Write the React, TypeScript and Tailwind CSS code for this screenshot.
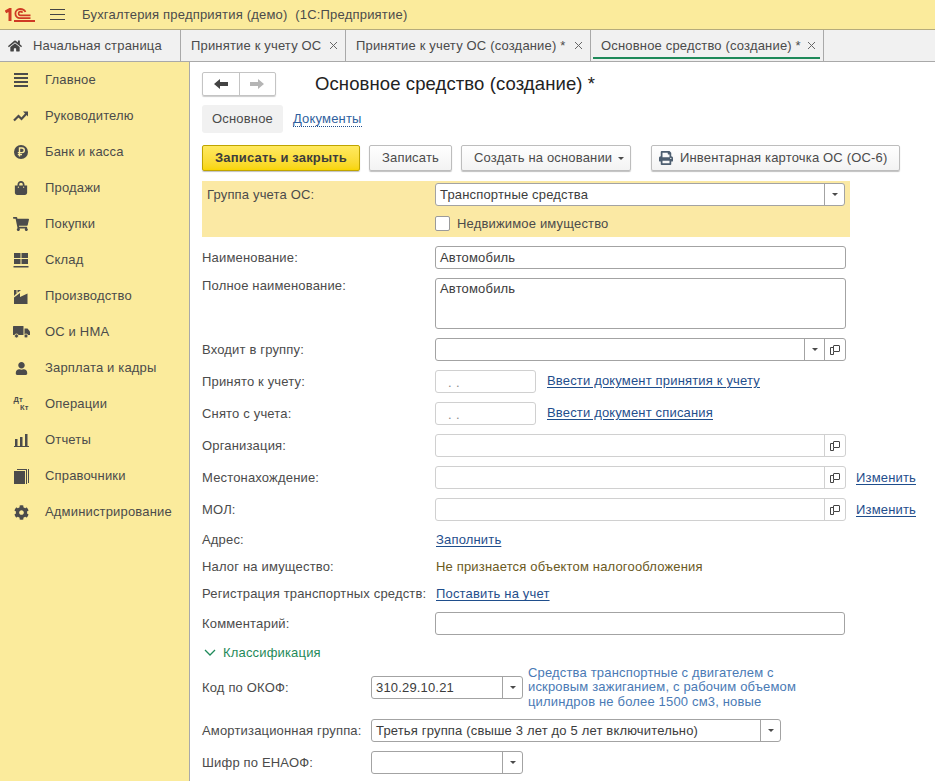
import type { ReactNode } from "react";
import { FaCog, FaHome, FaPrint, FaShoppingBag, FaShoppingCart, FaUser } from "react-icons/fa";

const Trend = () => (
  <svg width="16" height="16" viewBox="0 0 16 16" fill="none" stroke="#4b4b4b" strokeWidth="2.2">
    <path d="M1 12.5 5.5 8l3 3L14 5" />
    <path d="M10 3.6h5v5" fill="#4b4b4b" stroke="none" />
  </svg>
);

const Lines = () => (
  <svg width="16" height="14" viewBox="0 0 16 14" fill="#4b4b4b">
    <rect x="1" y="0" width="14" height="2" />
    <rect x="1" y="4" width="14" height="2" />
    <rect x="1" y="8" width="14" height="2" />
    <rect x="1" y="12" width="14" height="2" />
  </svg>
);

const Ruble = () => (
  <svg width="16" height="16" viewBox="0 0 16 16">
    <circle cx="8" cy="8" r="7" fill="#4b4b4b" />
    <path d="M6.5 12.5V4H9a2.2 2.2 0 0 1 0 4.6H4.8M4.8 10.6H9" fill="none" stroke="#fbeb9c" strokeWidth="1.4" />
  </svg>
);

const Store = () => (
  <svg width="16" height="15" viewBox="0 0 16 15" fill="#4b4b4b">
    <rect x="1" y="0" width="6.5" height="5" />
    <rect x="8.5" y="0" width="6.5" height="5" />
    <rect x="1" y="6" width="6.5" height="5" />
    <rect x="8.5" y="6" width="6.5" height="5" />
    <rect x="0.5" y="13" width="15" height="1.5" />
  </svg>
);

const Factory = () => (
  <svg width="16" height="15" viewBox="0 0 16 15" fill="#4b4b4b">
    <path d="M1 15V8.5L7 4v4l7.5-3.5V15z" />
    <path d="M1 7V1h2.5v3.5z" />
    <path d="M4.5 3.8V1H8z" />
  </svg>
);

const Truck = () => (
  <svg width="17" height="12" viewBox="0 0 17 12" fill="#4b4b4b">
    <rect x="0" y="0" width="10.5" height="9" rx="0.5" />
    <path d="M11.5 2.5h3L17 5.5V9h-5.5z" />
    <circle cx="3.5" cy="10" r="2" stroke="#fbeb9c" strokeWidth="0.8" />
    <circle cx="13" cy="10" r="2" stroke="#fbeb9c" strokeWidth="0.8" />
  </svg>
);

const Bars = () => (
  <svg width="15" height="13" viewBox="0 0 15 13" fill="#4b4b4b">
    <rect x="1" y="5" width="2.5" height="7" />
    <rect x="6" y="3" width="2.5" height="9" />
    <rect x="11" y="0" width="2.5" height="12" />
    <rect x="0" y="12" width="15" height="1" />
  </svg>
);

const Pages = () => (
  <svg width="15" height="15" viewBox="0 0 15 15" fill="#4b4b4b">
    <rect x="0" y="2" width="11" height="13" />
    <path d="M12 15V1H3V0h10v15z" />
    <path d="M14 14V0h1v14z" />
  </svg>
);

const DtKt = () => (
  <div className="flex w-[15px] flex-col text-[7.5px] leading-[8px] font-bold text-[#4b4b4b]">
    <span>Дт</span>
    <span className="self-end">Кт</span>
  </div>
);

const menu: { label: string; icon: ReactNode }[] = [
  { label: "Главное", icon: <Lines /> },
  { label: "Руководителю", icon: <Trend /> },
  { label: "Банк и касса", icon: <Ruble /> },
  { label: "Продажи", icon: <FaShoppingBag size={14} /> },
  { label: "Покупки", icon: <FaShoppingCart size={16} /> },
  { label: "Склад", icon: <Store /> },
  { label: "Производство", icon: <Factory /> },
  { label: "ОС и НМА", icon: <Truck /> },
  { label: "Зарплата и кадры", icon: <FaUser size={13} /> },
  { label: "Операции", icon: <DtKt /> },
  { label: "Отчеты", icon: <Bars /> },
  { label: "Справочники", icon: <Pages /> },
  { label: "Администрирование", icon: <FaCog size={15} /> },
];

const Logo = () => (
  <svg width="30" height="14" viewBox="0 0 30 14" fill="none" stroke="#cf3a24">
    <path d="M0.5 4 5 1.4V13" strokeWidth="3" />
    <path d="M25.5 10.2H15a4.6 4.6 0 0 1 0-9.2c2.8 0 4.6 1 5.4 3" strokeWidth="1.8" />
    <path d="M25.5 7.4h-10a1.9 1.9 0 0 1 0-3.8c1 0 1.7.3 2.1 1" strokeWidth="1.6" />
    <path d="M9 13h21" strokeWidth="2" />
  </svg>
);

const Caret = () => <span className="h-0 w-0 border-x-[3px] border-t-[3px] border-x-transparent border-t-[#4a4a4a]" />;

const CopyIcon = () => (
  <svg width="10" height="10" viewBox="0 0 10 10" fill="none" stroke="#444" strokeWidth="1">
    <rect x="3.5" y="0.5" width="6" height="6" rx="0.5" />
    <path d="M3.5 2.5H.5v7h3V6.5" />
  </svg>
);

const Close = () => (
  <svg width="9" height="9" viewBox="0 0 9 9" fill="none" stroke="#666" strokeWidth="1">
    <path d="m1 1 7 7M8 1 1 8" />
  </svg>
);

type FieldProps = {
  value?: string;
  width?: string;
  dark?: boolean;
  dropdown?: boolean;
  copy?: boolean;
};

function Field({ value, width = "w-[411px]", dark, dropdown, copy }: FieldProps) {
  const border = dark ? "border-[#a3a3a3]" : "border-[#d0d0d0]";
  return (
    <div className={`flex h-[23px] shrink-0 items-stretch rounded-[3px] border bg-white ${border} ${width}`}>
      <div className="flex-1 truncate pl-1 leading-[21px] text-[#3c3c3c]">{value}</div>
      {dropdown && (
        <div className={`flex w-[20px] items-center justify-center border-l ${border}`}>
          <Caret />
        </div>
      )}
      {copy && (
        <div className={`flex w-[21px] items-center justify-center border-l ${border}`}>
          <CopyIcon />
        </div>
      )}
    </div>
  );
}

const DateField = () => (
  <div className="flex h-[23px] w-[101px] shrink-0 rounded-[3px] border border-[#d0d0d0] pl-[12px] leading-[23px] text-[#8a8a8a]">
    <span className="w-[8px]">.</span>
    <span>.</span>
  </div>
);

function Row({ label, labelWidth = "w-[233px]", children }: { label: string; labelWidth?: string; children?: ReactNode }) {
  return (
    <div className="flex items-start">
      <div className={`shrink-0 leading-[23px] text-[#4b4b4b] ${labelWidth}`}>{label}</div>
      {children}
    </div>
  );
}

function TextRow({ label, children }: { label: string; children: ReactNode }) {
  return (
    <div className="flex h-[18px] items-center pt-[2px]">
      <div className="w-[234px] shrink-0 whitespace-nowrap text-[#4b4b4b]">{label}</div>
      {children}
    </div>
  );
}

const Link = ({ children }: { children: ReactNode }) => (
  <a className="whitespace-nowrap text-[#1f4e8c] underline underline-offset-2">{children}</a>
);

function Button({ children, className = "" }: { children: ReactNode; className?: string }) {
  return (
    <button
      className={`flex h-[26px] items-center rounded-[2px] border border-[#bdbdbd] bg-linear-to-b from-white to-[#f3f3f3] text-[#4b4b4b] shadow-[0_1px_1px_rgba(0,0,0,0.25)] ${className}`}
    >
      {children}
    </button>
  );
}

function Tab({ label, width, active }: { label: string; width: string; active?: boolean }) {
  return (
    <div className={`relative flex items-center justify-between border-r border-[#a9a9a9] pr-[7px] pl-[10px] ${width}`}>
      <span className="whitespace-nowrap text-[#4b4b4b]">{label}</span>
      <Close />
      {active && <span className="absolute right-[3px] bottom-[2px] left-[2px] h-[2px] bg-[#1f8a5a]" />}
    </div>
  );
}

export default function App() {
  return (
    <div className="flex h-[781px] w-[935px] flex-col overflow-hidden bg-white font-['Liberation_Sans',Arial,sans-serif] text-[13px] tracking-[0.17px]">
      <header className="flex h-[30px] shrink-0 items-center border-b border-[#b5ab7c] bg-[#fbeb9c] pl-[5px] text-[#4b4b4b]">
        <Logo />
        <div className="ml-[15px] flex w-[15px] flex-col gap-[4px]">
          <span className="h-px bg-[#444]" />
          <span className="h-px bg-[#444]" />
          <span className="h-px bg-[#444]" />
        </div>
        <span className="ml-[17px] whitespace-pre tracking-[0.2px]">Бухгалтерия предприятия (демо)  (1С:Предприятие)</span>
      </header>

      <nav className="flex h-[32px] shrink-0 border-b border-[#a9a9a9] bg-[#f1f1f1]">
        <div className="flex w-[181px] items-center border-r border-[#a9a9a9] pl-[8px] text-[#4b4b4b]">
          <FaHome size={14} color="#444" />
          <span className="ml-[11px]">Начальная страница</span>
        </div>
        <Tab label="Принятие к учету ОС" width="w-[165px]" />
        <Tab label="Принятие к учету ОС (создание) *" width="w-[245px]" />
        <Tab label="Основное средство (создание) *" width="w-[233px]" active />
      </nav>

      <div className="flex min-h-0 flex-1">
        <aside className="w-[190px] shrink-0 border-r border-[#a9a9a9] bg-[#fbeb9c]">
          {menu.map((m) => (
            <div key={m.label} className="flex h-[36px] items-center text-[#4b4b4b]">
              <div className="flex w-[45px] shrink-0 items-center justify-center pr-[3px]">{m.icon}</div>
              <span className="whitespace-nowrap">{m.label}</span>
            </div>
          ))}
        </aside>

        <main className="flex min-w-0 flex-1 flex-col pt-[10px] pl-[12px]">
          <div className="flex h-[24px] items-center">
            <div className="flex h-[24px] w-[74px] rounded-[2px] border border-[#c4c4c4] shadow-[0_1px_1px_rgba(0,0,0,0.2)]">
              <div className="flex flex-1 items-center justify-center border-r border-[#c4c4c4]">
                <svg width="14" height="10" viewBox="0 0 14 10" fill="#444"><path d="M0 5 6 0v3h8v4H6v3z" /></svg>
              </div>
              <div className="flex flex-1 items-center justify-center">
                <svg width="14" height="10" viewBox="0 0 14 10" fill="#b5b5b5"><path d="M14 5 8 0v3H0v4h8v3z" /></svg>
              </div>
            </div>
            <h1 className="ml-[39px] text-[18.5px] tracking-[0.1px] whitespace-nowrap text-[#222]">Основное средство (создание) *</h1>
          </div>

          <div className="mt-[9px] flex h-[28px] items-center">
            <div className="flex h-[28px] w-[81px] items-center justify-center rounded-[3px] bg-[#f1f1f1] text-[#4b4b4b]">Основное</div>
            <a className="ml-[10px] border-b border-dotted border-[#1f4e8c] leading-[15px] text-[#2f5f9e]">Документы</a>
          </div>

          <div className="mt-[12px] flex items-center">
            <button className="flex h-[26px] w-[158px] items-center justify-center rounded-[2px] border border-[#bfa400] bg-linear-to-b from-[#ffe95e] to-[#f8d500] font-bold text-[#3c3c3c] shadow-[0_1px_1px_rgba(0,0,0,0.25)]">
              Записать и закрыть
            </button>
            <Button className="ml-[9px] w-[83px] justify-center">Записать</Button>
            <Button className="ml-[9px] w-[170px] gap-[6px] pl-[12px]">
              Создать на основании
              <Caret />
            </Button>
            <Button className="ml-[20px] w-[249px] gap-[7px] pl-[7px]">
              <FaPrint size={14} color="#4d5e70" />
              Инвентарная карточка ОС (ОС-6)
            </Button>
          </div>

          <div className="mt-[10px] flex flex-col gap-[9px]">
            <div className="h-[56px] w-[648px] bg-[#fbe9a4] pt-[2px]">
              <div className="flex items-start pl-[5px]">
                <div className="w-[228px] shrink-0 leading-[23px] text-[#4b4b4b]">Группа учета ОС:</div>
                <Field value="Транспортные средства" width="w-[410px]" dark dropdown />
              </div>
              <div className="mt-[10px] flex h-[15px] items-center pl-[233px]">
                <span className="h-[15px] w-[15px] rounded-[2px] border border-[#9a9a9a] bg-white" />
                <span className="ml-[7px] text-[#4b4b4b]">Недвижимое имущество</span>
              </div>
            </div>

            <Row label="Наименование:">
              <Field value="Автомобиль" dark />
            </Row>
            <div className="flex items-start">
              <div className="w-[233px] shrink-0 leading-[15px] text-[#4b4b4b]">Полное наименование:</div>
              <div className="h-[51px] w-[411px] rounded-[3px] border border-[#a3a3a3] pl-1 leading-[19px] text-[#3c3c3c]">Автомобиль</div>
            </div>
            <Row label="Входит в группу:">
              <Field dark dropdown copy />
            </Row>
            <Row label="Принято к учету:">
              <DateField />
              <span className="ml-[11px] leading-[21px]"><Link>Ввести документ принятия к учету</Link></span>
            </Row>
            <Row label="Снято с учета:">
              <DateField />
              <span className="ml-[11px] leading-[21px]"><Link>Ввести документ списания</Link></span>
            </Row>
            <Row label="Организация:">
              <Field copy />
            </Row>
            <Row label="Местонахождение:">
              <Field copy />
              <span className="ml-[10px] leading-[23px]"><Link>Изменить</Link></span>
            </Row>
            <Row label="МОЛ:">
              <Field copy />
              <span className="ml-[10px] leading-[23px]"><Link>Изменить</Link></span>
            </Row>

            <TextRow label="Адрес:"><Link>Заполнить</Link></TextRow>
            <TextRow label="Налог на имущество:">
              <span className="text-[#6b5a1e]">Не признается объектом налогообложения</span>
            </TextRow>
            <TextRow label="Регистрация транспортных средств:"><Link>Поставить на учет</Link></TextRow>

            <div className="mt-px">
              <Row label="Комментарий:">
                <Field width="w-[410px]" dark />
              </Row>
            </div>

            <div className="flex h-[17px] items-center pl-[2px] text-[#1f8a5a]">
              <svg width="12" height="8" viewBox="0 0 12 8" fill="none" stroke="#1f8a5a" strokeWidth="1.3"><path d="m1 1 5 5 5-5" /></svg>
              <span className="ml-[7px]">Классификация</span>
            </div>

            <div className="-mt-[5px] flex h-[45px] items-center">
              <div className="w-[169px] shrink-0 text-[#4b4b4b]">Код по ОКОФ:</div>
              <Field value="310.29.10.21" width="w-[152px]" dark dropdown />
              <div className="ml-[5px] w-[290px] leading-[14.5px] text-[#4a7ab5]">
                Средства транспортные с двигателем с искровым зажиганием, с рабочим объемом цилиндров не более 1500 см3, новые
              </div>
            </div>
            <Row label="Амортизационная группа:" labelWidth="w-[169px]">
              <Field value="Третья группа (свыше 3 лет до 5 лет включительно)" width="w-[410px]" dark dropdown />
            </Row>
            <Row label="Шифр по ЕНАОФ:" labelWidth="w-[169px]">
              <Field width="w-[152px]" dark dropdown />
            </Row>
          </div>
        </main>
      </div>
    </div>
  );
}
